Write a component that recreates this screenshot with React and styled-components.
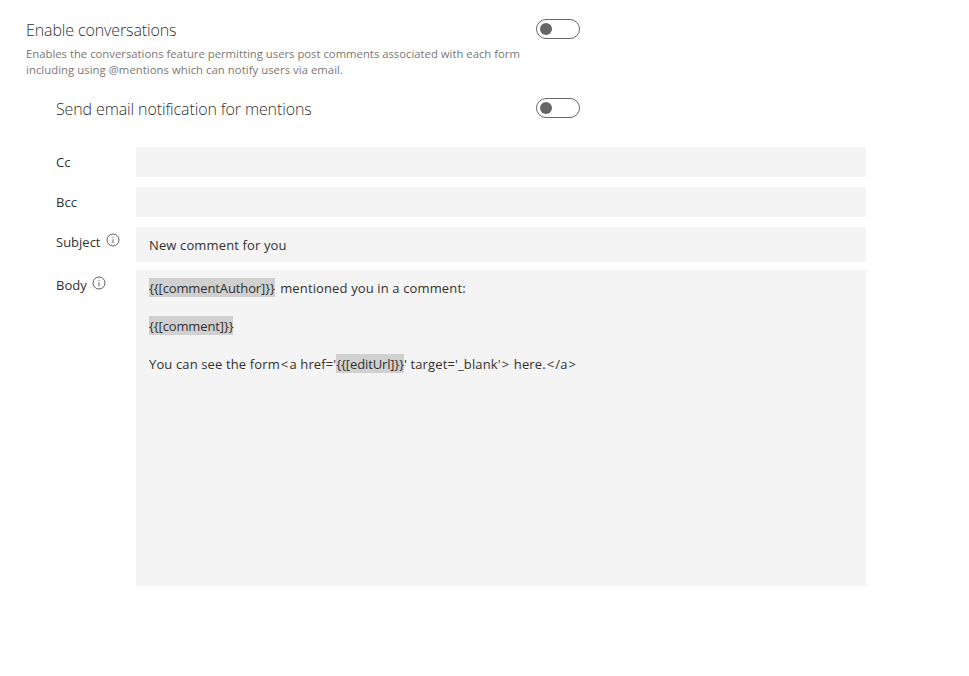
import React from "react";
import styled, { createGlobalStyle } from "styled-components";

const GlobalStyle = createGlobalStyle`
  html, body {
    margin: 0;
    padding: 0;
    background: #ffffff;
    font-family: "Open Sans", "Noto Sans", sans-serif;
    color: #323130;
  }
`;

const Page = styled.div`
  width: 969px;
  height: 676px;
  box-sizing: border-box;
  padding: 19px 0 0 26px;
`;

const SettingRow = styled.div`
  display: flex;
  align-items: center;
  justify-content: space-between;
  width: 554px;
  height: 20px;
  padding-left: ${(p) => (p.$nested ? "30px" : "0")};
  margin-top: ${(p) => (p.$nested ? "20px" : "0")};
  box-sizing: border-box;
`;

const SettingTitle = styled.span`
  font-size: 16px;
  font-weight: 300;
  line-height: 22px;
  padding-top: 2px;
  letter-spacing: -0.12px;
`;

const Description = styled.div`
  margin: 7px 0 0;
  width: 510px;
  font-size: 11.3px;
  line-height: 16px;
  color: #797775;
  white-space: nowrap;
`;

const DescriptionLine = styled.div`
  letter-spacing: ${(p) => (p.$wide ? "0.05px" : "0")};
`;

const Toggle = styled.span`
  display: flex;
  align-items: center;
  width: 44px;
  height: 20px;
  box-sizing: border-box;
  border: 1px solid #666666;
  border-radius: 10px;
  padding-left: 3px;
`;

const Thumb = styled.span`
  width: 12px;
  height: 12px;
  border-radius: 50%;
  background: #666666;
`;

const Fields = styled.div`
  margin: 29px 0 0 30px;
  display: grid;
  grid-template-columns: 80px 730px;
  grid-template-rows: 30px 30px 35px 316px;
  row-gap: 10px;
`;

const LabelCell = styled.div`
  display: flex;
  align-items: flex-start;
  gap: 5px;
  font-size: 13px;
  line-height: 30px;
  margin-top: ${(p) => (p.$tight ? "-2px" : "0")};
`;

const InfoIcon = styled.svg`
  width: 14px;
  height: 14px;
  margin-top: 6px;
  flex: none;
`;

const Field = styled.div`
  background: #f4f4f4;
  font-size: 13px;
  letter-spacing: 0.13px;
  color: #323130;
  padding: ${(p) => (p.$multi ? "8px 13px" : "0 13px")};
  line-height: ${(p) => (p.$multi ? "21px" : "36px")};
  box-sizing: border-box;
  margin-top: ${(p) => (p.$tight ? "-2px" : "0")};
  height: ${(p) => (p.$multi ? "316px" : "auto")};
  white-space: pre;
`;

const BodyLine = styled.div`
  height: 19px;
  margin-bottom: 19px;
`;

const Token = styled.span`
  display: inline-block;
  height: 19px;
  background: #d0d0d0;
  letter-spacing: -0.12px;
  margin-right: ${(p) => (p.$spaced ? "2px" : "0")};
`;

const Sym = styled.span`
  margin: 0 1px;
`;

function Info() {
  return (
    <InfoIcon viewBox="0 0 14 14" fill="none" stroke="#605e5c" strokeWidth="1">
      <circle cx="7" cy="7" r="6" />
      <path d="M7 6.2v4" />
      <path d="M7 3.8v1.1" />
    </InfoIcon>
  );
}

export default function App() {
  return (
    <Page>
      <GlobalStyle />
      <SettingRow>
        <SettingTitle>Enable conversations</SettingTitle>
        <Toggle><Thumb /></Toggle>
      </SettingRow>
      <Description>
        <DescriptionLine>Enables the conversations feature permitting users post comments associated with each form</DescriptionLine>
        <DescriptionLine $wide>including using @mentions which can notify users via email.</DescriptionLine>
      </Description>
      <SettingRow $nested>
        <SettingTitle>Send email notification for mentions</SettingTitle>
        <Toggle><Thumb /></Toggle>
      </SettingRow>
      <Fields>
        <LabelCell>Cc</LabelCell>
        <Field />
        <LabelCell>Bcc</LabelCell>
        <Field />
        <LabelCell>Subject <Info /></LabelCell>
        <Field>New comment for you</Field>
        <LabelCell $tight>Body <Info /></LabelCell>
        <Field $multi $tight>
          <BodyLine><Token $spaced>{"{{[commentAuthor]}}"}</Token> mentioned you in a comment:</BodyLine>
          <BodyLine><Token>{"{{[comment]}}"}</Token></BodyLine>
          <BodyLine>
            You can see the form<Sym>{"<"}</Sym>{"a href='"}<Token>{"{{[editUrl]}}"}</Token>{"' target='_blank'"}<Sym>{">"}</Sym>{" here."}<Sym>{"<"}</Sym>{"/a"}<Sym>{">"}</Sym>
          </BodyLine>
        </Field>
      </Fields>
    </Page>
  );
}
